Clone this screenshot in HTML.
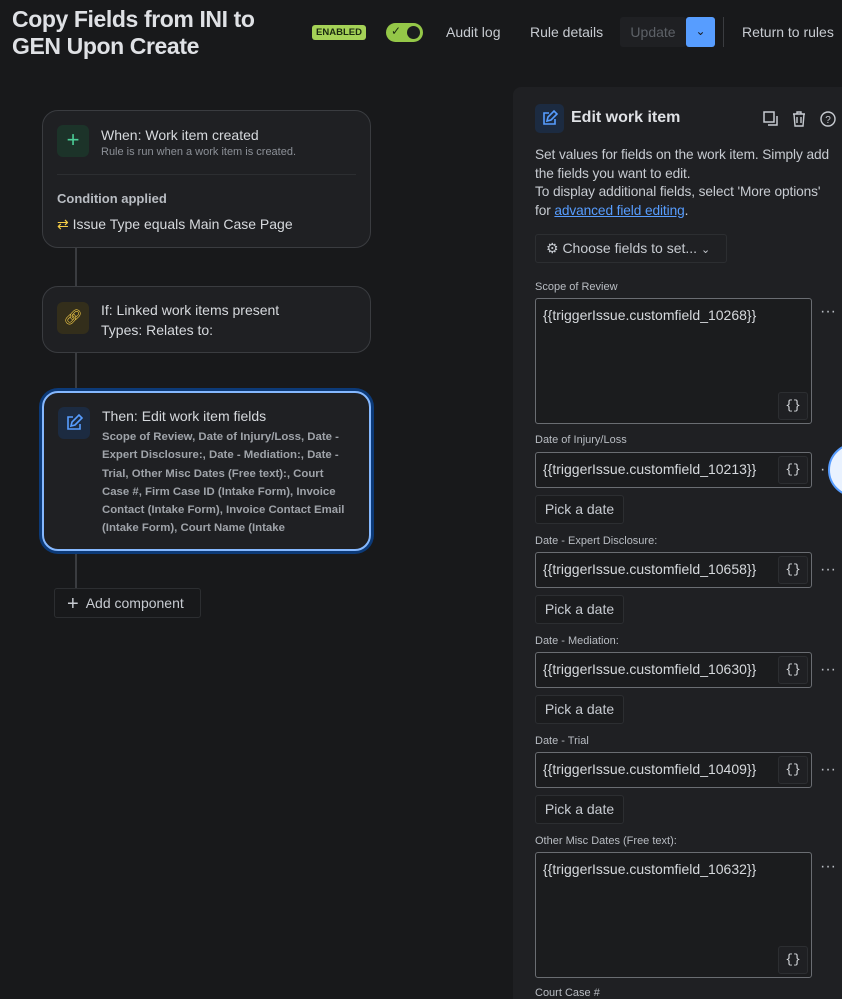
<!DOCTYPE html>
<html><head><meta charset="utf-8"><style>
*{box-sizing:border-box;margin:0;padding:0}
html,body{width:842px;height:999px;overflow:hidden}
body{background:#18191b;font-family:"Liberation Sans",sans-serif;color:#cfd2d6;position:relative}
.abs{position:absolute}
.title{left:12px;top:6px;font-size:23px;font-weight:bold;color:#dfe1e5;line-height:27px;letter-spacing:-0.4px}
.nav{font-size:14px;color:#c7cbd1;top:24px}
.card{position:absolute;left:42px;width:329px;background:#1f2023;border:1px solid #3a3c40;border-radius:16px}
.ico{position:absolute;left:14px;width:32px;height:32px;border-radius:6px}
.h{position:absolute;left:58px;font-size:14px;color:#d6d9dd}
.line{position:absolute;left:75px;width:2px;background:#3a3c40}
.panel{left:513px;top:87px;width:340px;height:912px;background:#1f2023;border-radius:8px 8px 0 0}
.lbl{position:absolute;left:535px;font-size:11px;color:#b9bdc3}
.inp{position:absolute;left:535px;width:277px;background:#1b1c1e;border:1px solid #6a6d72;border-radius:3px;font-size:14px;color:#d6d9dd;padding:8px 7px}
.br{position:absolute;right:3px;width:30px;height:28px;border:1px solid #2c2e31;background:#1f2023;border-radius:3px;font-size:13px;text-align:center;line-height:26px;color:#d6d9dd;font-family:"Liberation Mono",monospace}
.dots{position:absolute;left:820px;font-size:16px;color:#b9bdc3}
.pick{position:absolute;left:535px;width:89px;height:29px;background:#1b1c1e;border:1px solid #2c2e31;border-radius:3px;font-size:14px;line-height:27px;text-align:center;color:#c7cbd1}
</style></head><body>
<div class="abs title">Copy Fields from INI to<br>GEN Upon Create</div>
<div class="abs" style="left:312px;top:25px;width:54px;height:15px;background:#a5d257;border-radius:3px;color:#1b2a10;font-size:9.5px;font-weight:bold;text-align:center;line-height:15px">ENABLED</div>
<div class="abs" style="left:386px;top:23px;width:37px;height:19px;background:#94c748;border-radius:10px"><span style="position:absolute;left:5px;top:1px;font-size:12px;color:#1b2a10">✓</span><div style="position:absolute;right:3px;top:3px;width:13px;height:13px;border-radius:50%;background:#1b1c1e"></div></div>
<div class="abs nav" style="left:446px">Audit log</div>
<div class="abs nav" style="left:530px">Rule details</div>
<div class="abs" style="left:620px;top:17px;width:66px;height:30px;background:#1f2023;border-radius:3px;color:#5d6167;font-size:14px;line-height:30px;text-align:center">Update</div>
<div class="abs" style="left:686px;top:17px;width:29px;height:30px;background:#579dff;border-radius:3px;color:#1b1c1e;text-align:center;line-height:28px;font-size:12px">⌄</div>
<div class="abs" style="left:723px;top:17px;width:1px;height:30px;background:#3a3c40"></div>
<div class="abs nav" style="left:742px">Return to rules</div>

<div class="line" style="top:248px;height:38px"></div>
<div class="line" style="top:353px;height:38px"></div>
<div class="line" style="top:551px;height:38px"></div>

<div class="card" style="top:110px;height:138px">
 <div class="ico" style="top:14px;background:#1c3329;color:#4bce97;font-size:22px;text-align:center;line-height:30px">+</div>
 <div class="h" style="top:16px">When: Work item created</div>
 <div class="h" style="top:35px;font-size:11px;color:#8c9097">Rule is run when a work item is created.</div>
 <div style="position:absolute;left:14px;right:14px;top:63px;height:1px;background:#2c2e31"></div>
 <div style="position:absolute;left:14px;top:80px;font-size:13px;font-weight:bold;color:#b9bdc3">Condition applied</div>
 <div style="position:absolute;left:14px;top:105px;font-size:14px;color:#d6d9dd"><span style="color:#f5cd47">⇄</span> Issue Type equals Main Case Page</div>
</div>
<div class="card" style="top:286px;height:67px">
 <div class="ico" style="top:15px;background:#332e1b;color:#f5cd47;font-size:15px;text-align:center;line-height:32px">🔗︎</div>
 <div class="h" style="top:15px">If: Linked work items present</div>
 <div class="h" style="top:35px">Types: Relates to:</div>
</div>
<div class="card" style="top:391px;height:160px;border:2px solid #85b8ff;box-shadow:0 0 0 3px #0c3a78">
 <div class="ico" style="top:14px;background:#1c2b41"><svg width="32" height="32" viewBox="0 0 32 32"><path d="M15 10h-5v12h12v-5M13 19l1-4 7-7 3 3-7 7z" fill="none" stroke="#579dff" stroke-width="1.6"/></svg></div>
 <div class="h" style="top:15px">Then: Edit work item fields</div>
 <div style="position:absolute;left:58px;top:35px;width:250px;font-size:11.4px;font-weight:bold;color:#9fa3a9;line-height:18.3px">Scope of Review, Date of Injury/Loss, Date - Expert Disclosure:, Date - Mediation:, Date - Trial, Other Misc Dates (Free text):, Court Case #, Firm Case ID (Intake Form), Invoice Contact (Intake Form), Invoice Contact Email (Intake Form), Court Name (Intake</div>
</div>
<div class="abs" style="left:54px;top:588px;width:147px;height:30px;border:1px solid #2c2e31;border-radius:3px;font-size:14px;color:#c7cbd1;line-height:28px;padding-left:12px"><span style="font-size:20px;vertical-align:-2px">+</span>&nbsp; Add component</div>

<div class="abs panel"></div>
<div class="abs" style="left:535px;top:104px;width:29px;height:29px;background:#1c2b41;border-radius:5px"><svg width="29" height="29" viewBox="0 0 29 29"><path d="M14 9h-5v11h11v-5M12 17l1-4 6-6 3 3-6 6z" fill="none" stroke="#579dff" stroke-width="1.6"/></svg></div>
<div class="abs" style="left:571px;top:109px;font-size:16px;font-weight:bold;color:#dfe1e5">Edit work item</div>
<svg class="abs" style="left:762px;top:110px" width="80" height="18" viewBox="0 0 80 18"><rect x="2" y="2" width="10" height="10" fill="none" stroke="#c7cbd1" stroke-width="1.5"/><path d="M6 15h9V6" fill="none" stroke="#c7cbd1" stroke-width="1.5"/><path d="M31 4h12M35 4V2h4v2M32 4l1 12h8l1-12M35 7v6M39 7v6" fill="none" stroke="#c7cbd1" stroke-width="1.4"/><circle cx="66" cy="9" r="7" fill="none" stroke="#c7cbd1" stroke-width="1.4"/><text x="66" y="13" font-size="10" fill="#c7cbd1" text-anchor="middle" font-family="Liberation Sans">?</text></svg>
<div class="abs" style="left:535px;top:146px;width:300px;font-size:13.7px;line-height:18.5px;color:#c7cbd1;letter-spacing:-0.1px">Set values for fields on the work item. Simply add the fields you want to edit.<br>To display additional fields, select 'More options' for <span style="color:#579dff;text-decoration:underline">advanced field editing</span>.</div>
<div class="abs" style="left:535px;top:234px;width:192px;height:29px;border:1px solid #2c2e31;border-radius:3px;font-size:14px;line-height:27px;color:#c7cbd1;padding-left:10px">⚙ Choose fields to set... <span style="font-size:11px">⌄</span></div>

<div class="lbl" style="top:281px">Scope of Review</div>
<div class="inp" style="top:298px;height:126px">{{triggerIssue.customfield_10268}}<div class="br" style="bottom:3px">{}</div></div>
<div class="dots" style="top:303px">···</div>

<div class="lbl" style="top:434px">Date of Injury/Loss</div>
<div class="inp" style="top:452px;height:36px">{{triggerIssue.customfield_10213}}<div class="br" style="top:3px">{}</div></div>
<div class="pick" style="top:495px">Pick a date</div>

<div class="lbl" style="top:535px">Date - Expert Disclosure:</div>
<div class="inp" style="top:552px;height:36px">{{triggerIssue.customfield_10658}}<div class="br" style="top:3px">{}</div></div>
<div class="dots" style="top:561px">···</div>
<div class="pick" style="top:595px">Pick a date</div>

<div class="lbl" style="top:635px">Date - Mediation:</div>
<div class="inp" style="top:652px;height:36px">{{triggerIssue.customfield_10630}}<div class="br" style="top:3px">{}</div></div>
<div class="dots" style="top:661px">···</div>
<div class="pick" style="top:695px">Pick a date</div>

<div class="lbl" style="top:735px">Date - Trial</div>
<div class="inp" style="top:752px;height:36px">{{triggerIssue.customfield_10409}}<div class="br" style="top:3px">{}</div></div>
<div class="dots" style="top:761px">···</div>
<div class="pick" style="top:795px">Pick a date</div>

<div class="lbl" style="top:835px">Other Misc Dates (Free text):</div>
<div class="inp" style="top:852px;height:126px">{{triggerIssue.customfield_10632}}<div class="br" style="bottom:3px">{}</div></div>
<div class="dots" style="top:858px">···</div>
<div class="lbl" style="top:987px">Court Case #</div>

<div class="abs" style="left:828px;top:443px;width:54px;height:54px;border-radius:50%;background:#e9f2ff;border:2px solid #579dff"></div>
<div class="dots" style="top:461px;left:820px">·</div>
</body></html>
